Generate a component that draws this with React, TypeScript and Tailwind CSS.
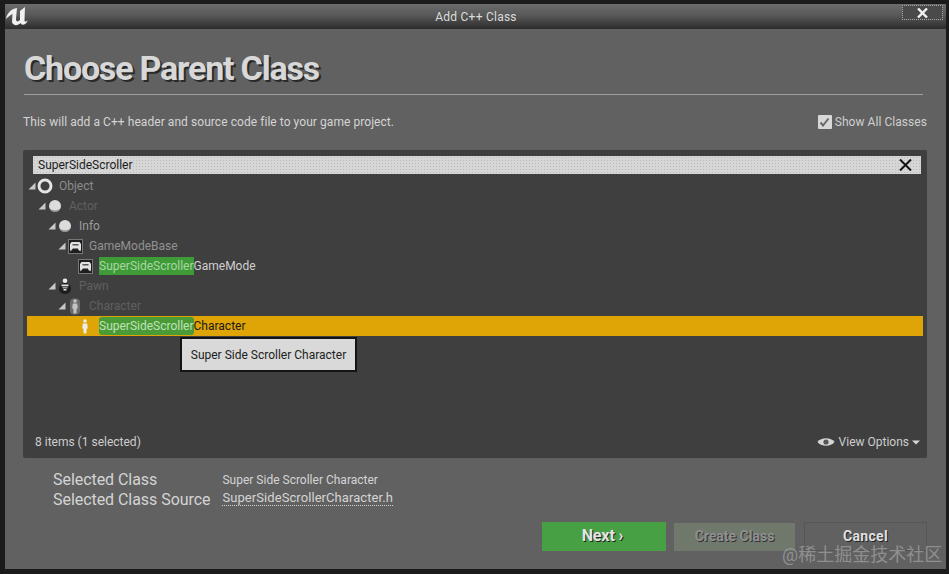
import React from "react";

const Arrow = ({ color = "#c8c8c8" }: { color?: string }) => (
  <svg width="8" height="8" viewBox="0 0 8 8" className="block">
    <path d="M7.5 0.5V7.5H0.5Z" fill={color} />
  </svg>
);

const Ring = () => (
  <svg width="16" height="16" viewBox="0 0 16 16"><circle cx="8" cy="8" r="6" fill="none" stroke="#e4e4e4" strokeWidth="3" /></svg>
);
const Ball = () => (
  <svg width="14" height="14" viewBox="0 0 14 14">
    <circle cx="7" cy="7" r="6" fill="#dcdcdc" />
    <path d="M1.6 9.5a6 6 0 0 0 10.8 0a9 9 0 0 1-10.8 0Z" fill="#8a8a8a" />
  </svg>
);
const Pad = () => (
  <svg width="15" height="15" viewBox="0 0 15 15">
    <rect x="0.5" y="0.5" width="14" height="14" fill="#1f1f1f" stroke="#777" />
    <path d="M3.5 3h8l1.5 2v5l-.5 2.5-2-1.5-.5-1.5H5L4.500 10l-2 2.500L2 10V5Z" fill="#e2e2e2" />
    <rect x="4.500" y="5" width="6" height="1.500" fill="#555" />
  </svg>
);
const PawnIcon = () => (
  <svg width="14" height="16" viewBox="0 0 14 16">
    <ellipse cx="7" cy="10.500" rx="6" ry="5.500" fill="#1d1d1d" />
    <circle cx="7" cy="2.800" r="2.300" fill="#ececec" />
    <path d="M3.500 6.500h7v1.800h-7Z" fill="#e2e2e2" />
    <path d="M4.500 9h5v1.500h-5Z" fill="#9a9a9a" />
    <path d="M5.500 11h3v1.500h-3Z" fill="#e8e8e8" />
  </svg>
);
const Figure = ({ c = "#c4c4c4", capsule = false }: { c?: string; capsule?: boolean }) => (
  <svg width="12" height="17" viewBox="0 0 12 17">
    {capsule && <rect x="1" y="0.500" width="10" height="16" rx="4" fill="#6c6c6c" />}
    <circle cx="6" cy="3" r="1.800" fill={c} />
    <path d="M3.800 5.500h4.400l.6 5H7.600l-.2 5H4.600l-.2-5H3.200Z" fill={c} />
  </svg>
);

type Row = { label: string; color: string; pad: string; icon: React.ReactNode };

const rows: Row[] = [
  { label: "Object", color: "text-[#8c8c8c]", pad: "pl-0", icon: <Ring /> },
  { label: "Actor", color: "text-[#5f5f5f]", pad: "pl-[10px]", icon: <Ball /> },
  { label: "Info", color: "text-[#9c9c9c]", pad: "pl-[20px]", icon: <Ball /> },
  { label: "GameModeBase", color: "text-[#929292]", pad: "pl-[30px]", icon: <Pad /> },
];
const rows2: Row[] = [
  { label: "Pawn", color: "text-[#5f5f5f]", pad: "pl-[20px]", icon: <PawnIcon /> },
  { label: "Character", color: "text-[#5f5f5f]", pad: "pl-[30px]", icon: <Figure capsule /> },
];

function TreeRow({ r }: { r: Row }) {
  return (
    <div className={`flex h-5 items-center ${r.pad}`}>
      <span className="flex w-[10px] justify-start pl-px"><Arrow /></span>
      <span className="flex w-4 justify-center">{r.icon}</span>
      <span className={`ml-[6px] text-[12px] ${r.color}`}>{r.label}</span>
    </div>
  );
}

export default function App() {
  return (
    <div className="relative flex h-[574px] w-[949px] flex-col overflow-hidden bg-[#1b1b1b] pb-[5px] pl-[5px] pr-[3px] pt-[4px] font-['Roboto',sans-serif]">
      {/* title bar */}
      <div className="relative flex h-[25px] shrink-0 items-center justify-center bg-[radial-gradient(#00000040_0.6px,transparent_0.7px),linear-gradient(#6c6c6c,#585858_45%,#2c2c2c)] bg-[length:2px_2px,100%_100%]">
        <svg width="24" height="22" viewBox="0 0 24 22" className="absolute left-0 top-0">
          <path d="M1 15C2 9 6 5 12 4L11 15C11 18 13 18 15 16L15 7 20 3 19.500 16C19.500 18 21 18 23 16L22 18C20 21 17 22 15.500 19 13 22 8 22 7 18L7.500 10C5 11 3 13 1 15Z" fill="#f0f0f0" />
        </svg>
        <span className="pl-[1px] pt-[1px] text-[12px] tracking-[0.25px] text-[#dcdcdc]">Add C++ Class</span>
        <div className="absolute right-[3px] top-[1px] flex h-[15px] w-[41px] items-center justify-center border border-dotted border-[#a8a8a8] bg-[#4a4a4a]">
          <svg width="11" height="10" viewBox="0 0 11 10"><path d="M1 0.5 10 9.500M10 0.5 1 9.500" stroke="#f2f2f2" strokeWidth="2.400" /></svg>
        </div>
      </div>

      {/* body */}
      <div className="flex min-h-0 flex-1 flex-col bg-[#616161] pl-[18px] pr-[19px]">
        <h1 className="ml-[1px] mt-[16px] h-[46px] text-[34px] font-bold leading-[46px] tracking-[-1.2px] text-[#d8d8d8] [text-shadow:2px_2px_0_#2a2a2a]">
          Choose Parent Class
        </h1>
        <div className="ml-[1px] mr-[4px] mt-[3px] h-px bg-[#a0a0a0]" />
        <div className="mt-[18px] flex h-[17px] items-center justify-between">
          <span className="pt-px text-[12px] tracking-[0.06px] text-[#d4d4d4]">
            This will add a C++ header and source code file to your game project.
          </span>
          <div className="flex items-center gap-[3px] pt-px">
            <span className="flex h-[14px] w-[14px] items-center justify-center rounded-[1px] bg-[#d8d8d8]">
              <svg width="11" height="10" viewBox="0 0 11 10"><path d="M1.500 5.500 4 8.500 9.500 1.500" fill="none" stroke="#6a6a6a" strokeWidth="2" /></svg>
            </span>
            <span className="text-[12px] tracking-[0.05px] text-[#cfcfcf]">Show All Classes</span>
          </div>
        </div>

        {/* panel */}
        <div className="relative mt-[20px] flex h-[308px] flex-col rounded-[2px] bg-[#3f3f3f] px-[4px]">
          <div className="ml-[6px] mr-[2px] mt-[6px] flex h-[18px] shrink-0 items-center justify-between bg-[#d6d6d6] bg-[radial-gradient(#bcbcbc_0.7px,transparent_0.8px)] bg-[length:3px_3px] pl-[5px] pr-[9px]">
            <span className="text-[12px] text-[#1c1c1c]">SuperSideScroller</span>
            <svg width="13" height="12" viewBox="0 0 13 12"><path d="M1 0.5 12 11.500M12 0.5 1 11.500" stroke="#111" strokeWidth="2" /></svg>
          </div>

          <div className="mt-[2px] flex flex-1 flex-col">
            {rows.map((r) => <TreeRow key={r.label} r={r} />)}
            <div className="flex h-5 items-center pl-[50px]">
              <span className="flex w-4 justify-center"><Pad /></span>
              <span className="ml-[6px] flex text-[12px] text-[#cfcfcf]">
                <span className="bg-[#3f9a38] text-[#a8d8a2]">SuperSideScroller</span>GameMode
              </span>
            </div>
            {rows2.map((r) => <TreeRow key={r.label} r={r} />)}
            <div className="flex h-5 items-center bg-[#dfa406] pl-[50px]">
              <span className="flex w-4 justify-center"><Figure c="#ececec" /></span>
              <span className="ml-[6px] flex text-[12px] text-[#1a1a1a]">
                <span className="rounded-[3px] bg-[#4b9a38] text-[#bfe3b8]">SuperSideScroller</span>Character
              </span>
            </div>
          </div>

          <div className="flex h-[32px] shrink-0 items-center justify-between pl-[8px] pr-[3px] text-[12px] text-[#cdcdcd]">
            <span>8 items (1 selected)</span>
            <span className="flex items-center">
              <svg width="18" height="12" viewBox="0 0 18 12" className="mr-[4px]">
                <path d="M0.5 6C4 1 14 1 17.500 6 14 11 4 11 0.5 6Z" fill="#d6d6d6" />
                <circle cx="9" cy="6" r="2.600" fill="#555" />
              </svg>
              <span>View Options</span>
              <svg width="8" height="5" viewBox="0 0 8 5" className="ml-[3px]"><path d="M0 0.5H8L4 4.500Z" fill="#d6d6d6" /></svg>
            </span>
          </div>
        </div>

        {/* details */}
        <div className="ml-[30px] mt-[12px] flex gap-[12px]">
          <div className="flex flex-col text-[16px] leading-[20px] tracking-[-0.05px] text-[#d4d4d4]">
            <span>Selected Class</span>
            <span>Selected Class Source</span>
          </div>
          <div className="flex flex-col items-start text-[#d4d4d4]">
            <span className="text-[12px] leading-[20px]">Super Side Scroller Character</span>
            <span className="border-b border-dotted border-[#d4d4d4] text-[13px] leading-[15px] tracking-[0.07px]">SuperSideScrollerCharacter.h</span>
          </div>
        </div>

        {/* buttons */}
        <div className="mt-[12px] flex justify-end">
          <div className="mr-[8px] flex h-[29px] w-[124px] items-center justify-center bg-[#47a043] pb-px pr-[3px] text-[16px] font-bold tracking-[-0.1px] text-[#e4e4e4] [text-shadow:1px_1px_0_#222]">Next ›</div>
          <div className="mr-[9px] mt-px flex h-[28px] w-[121px] items-center justify-center bg-[#a3a9a0] bg-[radial-gradient(#6b7568_0.7px,transparent_0.8px)] bg-[length:2px_2px] pb-px text-[14px] font-bold text-[#8f8f8f] [text-shadow:1px_1px_0_#333]">Create Class</div>
          <div className="flex h-[29px] w-[123px] items-center justify-center border border-[#565656] pb-px text-[14px] font-bold tracking-[0.3px] text-[#e0e0e0] [text-shadow:1px_1px_0_#222]">Cancel</div>
        </div>
      </div>

      {/* overlays */}
      <div className="absolute left-[180px] top-[337px] flex h-[35px] w-[177px] items-center justify-center border-2 border-[#141414] bg-[#d9d9d9] text-[12px] text-[#222]">
        Super Side Scroller Character
      </div>
      <div className="absolute left-[782px] top-[544px] font-['Roboto','Noto_Sans_CJK_SC',sans-serif] text-[18px] leading-[22px] text-[#a5a5a5]/70">
        @稀土掘金技术社区
      </div>
    </div>
  );
}
